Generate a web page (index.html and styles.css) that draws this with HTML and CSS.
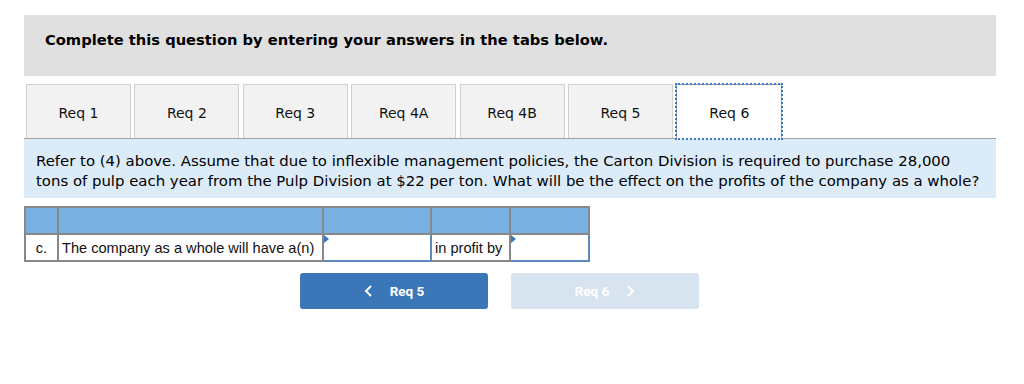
FILE: index.html
```html
<!DOCTYPE html>
<html lang="en">
<head>
    <meta charset="UTF-8">
    <title>Req 6</title>
    <link rel="stylesheet" href="styles.css">
</head>
<body>
    <div class="page">
        <div class="instructions">Complete this question by entering your answers in the tabs below.</div>

        <div class="tabs">
            <div class="tab">Req 1</div>
            <div class="tab">Req 2</div>
            <div class="tab">Req 3</div>
            <div class="tab">Req 4A</div>
            <div class="tab">Req 4B</div>
            <div class="tab">Req 5</div>
            <div class="tab active">Req 6</div>
        </div>

        <div class="question">
            Refer to (4) above. Assume that due to inflexible management policies, the Carton Division is required to purchase 28,000<br>
            tons of pulp each year from the Pulp Division at $22 per ton. What will be the effect on the profits of the company as a whole?
        </div>

        <table class="answer">
            <colgroup>
                <col style="width: 33px">
                <col style="width: 265px">
                <col style="width: 108px">
                <col style="width: 79px">
                <col style="width: 79px">
            </colgroup>
            <tr class="head">
                <td></td>
                <td></td>
                <td></td>
                <td></td>
                <td></td>
            </tr>
            <tr>
                <td class="c-letter">c.</td>
                <td>The company as a whole will have a(n)</td>
                <td class="input-cell"><span class="flag"></span></td>
                <td>in profit by</td>
                <td class="input-cell"><span class="flag"></span></td>
            </tr>
        </table>

        <div class="nav">
            <button class="nav-btn prev">
                <svg width="10" height="14" viewBox="0 0 10 14"><polyline points="7,2 2,7 7,12" fill="none" stroke="#fff" stroke-width="2"/></svg>
                <span>Req 5</span>
            </button>
            <button class="nav-btn next">
                <span>Req 6</span>
                <svg width="10" height="14" viewBox="0 0 10 14"><polyline points="3,2 8,7 3,12" fill="none" stroke="#fff" stroke-width="2"/></svg>
            </button>
        </div>
    </div>
</body>
</html>
```

FILE: styles.css
```css
body {
    margin: 0;
    background-color: #fff;
    font-family: 'DejaVu Sans', Verdana, sans-serif;
    color: #000;
}

.page {
    padding: 15px 28px 0 24px;
}

.instructions {
    background-color: #e0e0e0;
    height: 61px;
    padding-left: 21px;
    font-weight: bold;
    font-size: 14.7px;
    line-height: 50px;
}

.tabs {
    display: flex;
    gap: 3.4px;
    margin-top: 8px;
    padding-left: 2px;
    height: 54px;
    border-bottom: 1px solid #a0a0a0;
}

.tab {
    width: 105px;
    box-sizing: border-box;
    background-color: #f2f2f2;
    border: 1px solid #d0d0d0;
    border-bottom: none;
    font-size: 14px;
    text-align: center;
    line-height: 56px;
    color: #111;
}

.tab.active {
    background-color: #fff;
    border: 1px solid #a0a0a0;
    border-bottom: none;
    width: 106px;
    outline: 2px dotted #3a7bc8;
    outline-offset: -1px;
    height: 55px;
}

.question {
    background-color: #dcebf8;
    height: 59px;
    padding: 12px 0 0 12px;
    box-sizing: border-box;
    font-size: 14.9px;
    line-height: 20px;
}

.answer {
    margin-top: 8px;
    border-collapse: collapse;
    table-layout: fixed;
    width: 564px;
    font-family: 'Liberation Sans', Arial, sans-serif;
    font-size: 14.6px;
    color: #111;
}

.answer td {
    border: 2px solid #888;
    height: 25px;
    padding: 0 3px;
    white-space: nowrap;
    overflow: hidden;
}

.answer tr.head td {
    background-color: #7aafe2;
}

.c-letter {
    text-align: center;
}

.input-cell {
    position: relative;
    border-color: #5d87bd !important;
}

.flag {
    position: absolute;
    left: 0;
    top: 0;
    width: 0;
    height: 0;
    border-top: 4px solid transparent;
    border-bottom: 4px solid transparent;
    border-left: 5px solid #3a76b8;
}

.nav {
    display: flex;
    gap: 23px;
    margin: 11px 0 0 276px;
}

.nav-btn {
    width: 188px;
    height: 36px;
    border: none;
    border-radius: 3px;
    font-family: Roboto, 'Liberation Sans', sans-serif;
    font-weight: bold;
    font-size: 13.5px;
    color: #fff;
    display: flex;
    align-items: center;
    justify-content: center;
    gap: 16px;
    padding: 0;
}

.nav-btn.prev {
    background-color: #3a76b8;
}

.nav-btn.next {
    background-color: #d8e3f0;
}
```
